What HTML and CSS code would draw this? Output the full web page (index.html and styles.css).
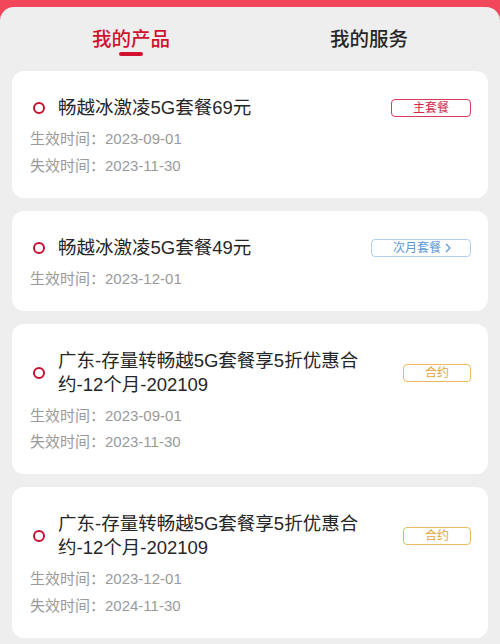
FILE: index.html
```html
<!DOCTYPE html>
<html lang="zh-CN">
<head>
<meta charset="utf-8">
<title>我的产品</title>
<link rel="stylesheet" href="styles.css">
</head>
<body>
<div class="page">
  <div class="panel">
    <nav class="tabs">
      <div class="tab active"><span class="tab-text">我的产品</span><span class="tab-bar"></span></div>
      <div class="tab"><span class="tab-text">我的服务</span></div>
    </nav>
    <div class="list">
      <div class="card">
        <div class="head">
          <span class="dot"></span>
          <div class="title">畅越冰激凌5G套餐69元</div>
          <span class="badge badge-red">主套餐</span>
        </div>
        <div class="meta">生效时间：2023-09-01</div>
        <div class="meta">失效时间：2023-11-30</div>
      </div>
      <div class="card">
        <div class="head">
          <span class="dot"></span>
          <div class="title">畅越冰激凌5G套餐49元</div>
          <span class="badge badge-blue">次月套餐<svg class="chev" width="6" height="10" viewBox="0 0 6 10"><path d="M1 1 L5 5 L1 9" fill="none" stroke="currentColor" stroke-width="1.2"/></svg></span>
        </div>
        <div class="meta">生效时间：2023-12-01</div>
      </div>
      <div class="card">
        <div class="head">
          <span class="dot"></span>
          <div class="title">广东-存量转畅越5G套餐享5折优惠合约-12个月-202109</div>
          <span class="badge badge-orange">合约</span>
        </div>
        <div class="meta">生效时间：2023-09-01</div>
        <div class="meta">失效时间：2023-11-30</div>
      </div>
      <div class="card">
        <div class="head">
          <span class="dot"></span>
          <div class="title">广东-存量转畅越5G套餐享5折优惠合约-12个月-202109</div>
          <span class="badge badge-orange">合约</span>
        </div>
        <div class="meta">生效时间：2023-12-01</div>
        <div class="meta">失效时间：2024-11-30</div>
      </div>
    </div>
  </div>
</div>
</body>
</html>
```
FILE: styles.css
```css
* { box-sizing: border-box; }
html, body { margin: 0; padding: 0; }
body {
  width: 500px;
  height: 644px;
  overflow: hidden;
  background: #f2465a;
  font-family: "Liberation Sans", "Noto Sans CJK SC", sans-serif;
}
.page { padding-top: 7px; height: 644px; }
.panel {
  background: #eeeeee;
  border-radius: 14px 14px 0 0;
  height: 637px;
  padding: 0 12px;
}
.tabs { display: flex; align-items: flex-start; padding-top: 20px; height: 49px; }
.tab {
  flex: 1;
  display: flex;
  flex-direction: column;
  align-items: center;
}
.tab-text {
  font-family: "Noto Sans CJK SC", sans-serif;
  font-size: 19.5px;
  line-height: 22px;
  font-weight: 500;
  color: #262626;
}
.tab.active .tab-text { color: #d0122e; }
.tab-bar {
  width: 24px;
  height: 4px;
  border-radius: 2px;
  background: #d0122e;
  margin-top: 3px;
}
.list { display: flex; flex-direction: column; gap: 13px; margin-top: 15px; }
.card {
  background: #ffffff;
  border-radius: 12px;
  padding: 25px 17px 18.5px 18px;
}
.head { display: flex; align-items: center; }
.dot {
  width: 12px;
  height: 12px;
  border: 2.5px solid #c8102e;
  border-radius: 50%;
  margin-left: 2.5px;
  flex-shrink: 0;
}
.title {
  margin-left: 13.5px;
  max-width: 310px;
  font-size: 18.5px;
  line-height: 24px;
  color: #262626;
}
.badge {
  margin-left: auto;
  flex-shrink: 0;
  display: flex;
  align-items: center;
  height: 18px;
  padding: 0 21px;
  border: 1px solid;
  border-radius: 4px;
  font-size: 12px;
  line-height: 16px;
}
.badge-red { color: #d4284a; border-color: #d83a58; }
.badge-blue { color: #5a98d6; border-color: #b3cfee; padding: 0 19px 0 21px; }
.badge-orange { color: #e3a43a; border-color: #ebb95e; }
.chev { margin-left: 4px; }
.meta {
  font-size: 15px;
  line-height: 26.5px;
  color: #9a9a9a;
}
.head + .meta { margin-top: 6px; }
```
